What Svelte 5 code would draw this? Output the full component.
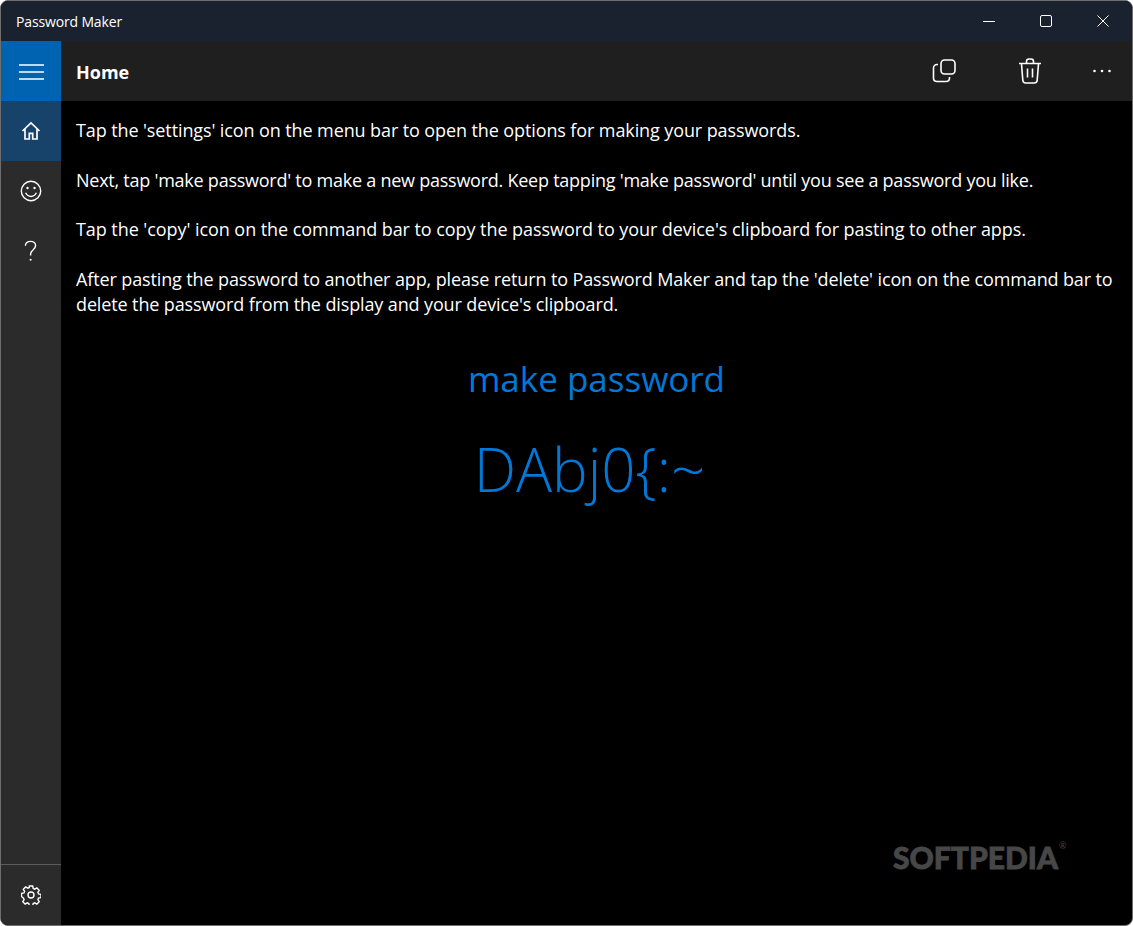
<script lang="ts">
  const paragraphs = [
    "Tap the 'settings' icon on the menu bar to open the options for making your passwords.",
    "Next, tap 'make password' to make a new password. Keep tapping 'make password' until you see a password you like.",
    "Tap the 'copy' icon on the command bar to copy the password to your device's clipboard for pasting to other apps.",
    "After pasting the password to another app, please return to Password Maker and tap the 'delete' icon on the command bar to delete the password from the display and your device's clipboard."
  ];
</script>

<div class="window">
  <header class="titlebar">
    <span class="app-title">Password Maker</span>
    <div class="caption">
      <button aria-label="Minimize">
        <svg width="12" height="12" viewBox="0 0 12 12"><path d="M0 6.5h12" /></svg>
      </button>
      <button aria-label="Maximize">
        <svg width="12" height="12" viewBox="0 0 12 12"><rect x="0.5" y="0.5" width="11" height="11" rx="1.5" /></svg>
      </button>
      <button aria-label="Close">
        <svg width="12" height="12" viewBox="0 0 12 12"><path d="M0.5 0.5l11 11M11.5 0.5l-11 11" /></svg>
      </button>
    </div>
  </header>

  <div class="body">
    <nav class="rail">
      <button class="rail-item burger" aria-label="Menu">
        <svg width="25" height="16" viewBox="0 0 25 16"><path d="M0 1h25M0 8h25M0 15h25" /></svg>
      </button>
      <button class="rail-item active" aria-label="Home">
        <svg class="home" width="20" height="20" viewBox="0 0 20 20"><path d="M1.500 10L10 2l8.500 8M4 8v10h4.300v-5.600h3.400V18H16V8" /></svg>
      </button>
      <button class="rail-item" aria-label="Feedback">
        <svg width="22" height="22" viewBox="0 0 22 22">
          <circle cx="11" cy="11" r="9.700" />
          <path d="M5.600 12.800c1.200 2.400 3.200 3.700 5.400 3.700s4.200-1.300 5.400-3.700" />
          <circle class="dot" cx="7.500" cy="8" r="1.200" />
          <circle class="dot" cx="14.500" cy="8" r="1.200" />
        </svg>
      </button>
      <button class="rail-item" aria-label="Help">
        <svg width="20" height="22" viewBox="0 0 20 22">
          <path d="M4.400 5.800C4.600 3 6.800 1.400 9.600 1.400c2.900 0 5 1.800 5 4.200 0 2-1.100 3-2.400 4.100-1.500 1.200-2.600 2.300-2.600 4.500v1.200" />
          <circle class="dot" cx="9.600" cy="19.800" r="1" />
        </svg>
      </button>
      <div class="rail-spacer"></div>
      <button class="rail-item settings" aria-label="Settings">
        <svg width="20" height="20" viewBox="0 0 20 20">
          <circle cx="10" cy="10" r="3" />
          <path d="M8.300 1h3.400l.5 2.500 1.500.7 2.200-1.300 2.300 2.400-1.300 2.100.6 1.500 2.500.5v3.200l-2.500.5-.6 1.500 1.300 2.100-2.300 2.400-2.200-1.300-1.500.7-.5 2.500H8.300l-.5-2.500-1.500-.7-2.200 1.300-2.300-2.400 1.300-2.100-.6-1.500L.5 11.600V8.400l2.500-.5.600-1.500-1.300-2.100 2.300-2.400 2.200 1.300 1.500-.7z" />
        </svg>
      </button>
    </nav>

    <div class="main">
      <div class="commandbar">
        <h1>Home</h1>
        <div class="commands">
          <button class="copy" aria-label="Copy">
            <svg width="24" height="24" viewBox="0 0 24 24">
              <rect x="9" y="1" width="14" height="14" rx="3.500" />
              <path d="M6 5.500H5C3 5.500 1.500 7 1.500 9v10c0 2 1.500 3.500 3.500 3.500h9c2 0 3.500-1.500 3.500-3.500v-1" />
            </svg>
          </button>
          <button class="trash" aria-label="Delete">
            <svg width="24" height="26" viewBox="0 0 24 26">
              <path d="M1 5.500h22M8.500 5V3.500C8.500 2 9.500 1 11 1h2c1.500 0 2.500 1 2.500 2.500V5M3.500 6l1.300 16c.1 1.800 1.300 3 3 3h8.400c1.700 0 2.900-1.200 3-3l1.300-16M9.500 10.500v9M14.500 10.500v9" />
            </svg>
          </button>
          <button class="more" aria-label="More">
            <svg width="18" height="4" viewBox="0 0 18 4">
              <circle class="dot" cx="1.500" cy="2" r="1.300" />
              <circle class="dot" cx="9" cy="2" r="1.300" />
              <circle class="dot" cx="16.500" cy="2" r="1.300" />
            </svg>
          </button>
        </div>
      </div>

      <div class="content">
        <div class="intro">
          {#each paragraphs as text}
            <p>{text}</p>
          {/each}
        </div>
        <div class="make">make password</div>
        <div class="password">DAbj0&#123;:~</div>
      </div>
    </div>
  </div>

  <div class="watermark">SOFTPEDIA<span class="reg">®</span></div>
</div>

<style>
  :global(body) {
    margin: 0;
    background: #fff;
  }

  .window {
    position: relative;
    box-sizing: border-box;
    width: 1133px;
    height: 926px;
    display: flex;
    flex-direction: column;
    overflow: hidden;
    border: 1px solid #6e6e6e;
    border-radius: 8px;
    background: #000;
    color: #fff;
    font-family: "Open Sans", "Noto Sans", sans-serif;
  }

  button {
    display: flex;
    align-items: center;
    justify-content: center;
    padding: 0;
    border: 0;
    background: none;
    color: inherit;
  }

  svg {
    display: block;
    fill: none;
    stroke: #fff;
    stroke-width: 1.4;
  }

  svg .dot {
    fill: #fff;
    stroke: none;
  }

  .titlebar {
    flex: none;
    height: 40px;
    display: flex;
    align-items: center;
    justify-content: space-between;
    background: #1a2230;
  }

  .app-title {
    margin-left: 15px;
    font-size: 14px;
    letter-spacing: -0.15px;
  }

  .caption {
    display: flex;
    margin-right: 1px;
  }

  .caption button {
    width: 57px;
    height: 40px;
  }

  .caption svg {
    stroke-width: 1;
  }

  .body {
    flex: 1;
    display: flex;
    min-height: 0;
  }

  .rail {
    flex: none;
    width: 60px;
    display: flex;
    flex-direction: column;
    background: #2b2b2b;
  }

  .rail-item {
    flex: none;
    height: 60px;
  }

  .burger {
    padding-top: 2px;
    background: #0063b1;
  }

  .burger svg {
    stroke-width: 1.6;
  }

  .active {
    background: #17436b;
  }

  .home {
    stroke-width: 1.7;
  }

  .rail-spacer {
    flex: 1;
  }

  .settings {
    box-sizing: border-box;
    height: 61px;
    border-top: 1px solid #5c5c5c;
  }

  .main {
    flex: 1;
    display: flex;
    flex-direction: column;
    min-width: 0;
  }

  .commandbar {
    flex: none;
    height: 60px;
    display: flex;
    align-items: center;
    justify-content: space-between;
    background: #1f1f1f;
  }

  h1 {
    margin: 2px 0 0 15px;
    font-size: 18px;
    font-weight: 700;
  }

  .commands {
    display: flex;
    align-items: center;
    margin-right: 1px;
  }

  .commands button {
    height: 60px;
  }

  .commands svg {
    stroke-width: 1.6;
  }

  .copy {
    width: 86px;
  }

  .trash {
    width: 86px;
  }

  .more {
    width: 58px;
  }

  .content {
    flex: 1;
    padding: 17px 15px 0;
  }

  .intro p {
    margin: 0 0 24.500px;
    font-size: 18px;
    line-height: 25px;
  }

  /* Open Sans runs wider than the original UI font, by a different amount per line */
  .intro p:nth-child(1) {
    letter-spacing: -0.105px;
  }

  .intro p:nth-child(2) {
    letter-spacing: -0.245px;
  }

  .intro p:nth-child(3) {
    letter-spacing: -0.062px;
  }

  .intro p:nth-child(4) {
    letter-spacing: -0.125px;
  }

  .make {
    margin-top: 37px;
    text-align: center;
    color: #0078d7;
    font-size: 35px;
    line-height: 50px;
  }

  .password {
    margin-top: 25px;
    padding-right: 14px;
    text-align: center;
    color: #0078d7;
    font-size: 60px;
    font-weight: 300;
    line-height: 80px;
  }

  .watermark {
    position: absolute;
    left: 892px;
    top: 838px;
    color: #474747;
    font-family: "Lato", sans-serif;
    font-size: 30px;
    font-weight: 900;
    -webkit-text-stroke: 0.8px #474747;
  }

  .reg {
    position: absolute;
    left: 166px;
    top: 1px;
    font-size: 9px;
    font-weight: 400;
    -webkit-text-stroke: 0;
  }
</style>
